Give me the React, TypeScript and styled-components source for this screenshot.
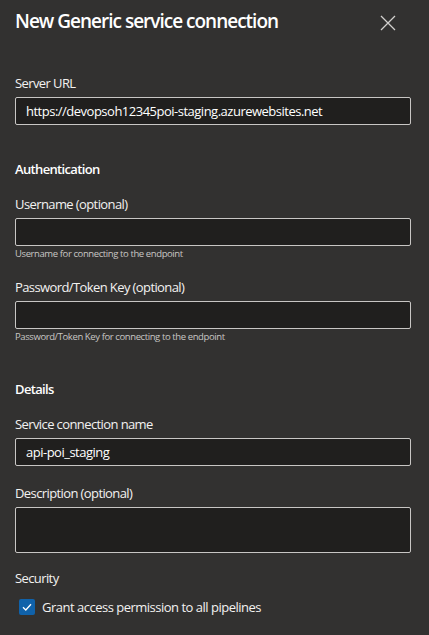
import React from "react";
import styled, { createGlobalStyle } from "styled-components";

const GlobalStyle = createGlobalStyle`
  html, body {
    margin: 0;
    padding: 0;
    background: #323130;
  }
  * { box-sizing: border-box; }
`;

const Panel = styled.div`
  width: 429px;
  height: 635px;
  background: #323130;
  padding: 7px 18px 0 15px;
  font-family: "Open Sans", "Noto Sans", sans-serif;
  color: #f3f2f1;
  overflow: hidden;
`;

const Header = styled.div`
  display: flex;
  align-items: center;
  justify-content: space-between;
  height: 28px;
`;

const Title = styled.h1`
  margin: 0;
  font-size: 19px;
  line-height: 28px;
  font-weight: 600;
  color: #ffffff;
  letter-spacing: -1px;
`;

const CloseButton = styled.button`
  display: flex;
  align-items: center;
  justify-content: center;
  width: 16px;
  height: 16px;
  padding: 0;
  margin: 3px 15px 0 0;
  border: none;
  background: transparent;
  color: #d2d0ce;
  cursor: pointer;
`;

const Body = styled.div`
  display: flex;
  flex-direction: column;
  margin-top: 38px;
`;

const SectionHeading = styled.div`
  font-size: 13px;
  line-height: 20px;
  font-weight: 600;
  color: #ffffff;
  margin-top: 34px;
  letter-spacing: -0.65px;
`;

const Field = styled.div<{ $gap?: number }>`
  display: flex;
  flex-direction: column;
  margin-top: ${(p) => (p.$gap ?? 15)}px;
`;

const Label = styled.label`
  font-size: 13px;
  line-height: 20px;
  color: #f3f2f1;
  margin-bottom: 4px;
  letter-spacing: -0.6px;
`;

const TextInput = styled.input`
  width: 100%;
  height: 28px;
  border: 1px solid #c8c6c4;
  border-radius: 2px;
  background: #201f1e;
  color: #ffffff;
  font-family: inherit;
  font-size: 13px;
  letter-spacing: -0.5px;
  padding: 0 10px;
  outline: none;
`;

const TextArea = styled.textarea`
  width: 100%;
  height: 46px;
  border: 1px solid #c8c6c4;
  border-radius: 2px;
  background: #201f1e;
  color: #ffffff;
  font-family: inherit;
  font-size: 13px;
  padding: 6px 10px;
  resize: none;
  outline: none;
  display: block;
`;

const Helper = styled.div`
  font-size: 9.5px;
  line-height: 16px;
  color: #c8c6c4;
  letter-spacing: -0.4px;
`;

const CheckRow = styled.label`
  display: flex;
  align-items: center;
  gap: 7px;
  margin: 5px 0 0 4px;
  font-size: 13px;
  line-height: 20px;
  color: #f3f2f1;
  letter-spacing: -0.5px;
`;

const CheckBox = styled.span`
  display: flex;
  align-items: center;
  justify-content: center;
  width: 16px;
  height: 16px;
  border-radius: 2px;
  background: #1062aa;
  flex-shrink: 0;
`;

const CloseIcon = () => (
  <svg width="16" height="16" viewBox="0 0 16 16" fill="none">
    <path d="M1 1 L15 15 M15 1 L1 15" stroke="currentColor" strokeWidth="1.3" />
  </svg>
);

const CheckIcon = () => (
  <svg width="12" height="12" viewBox="0 0 12 12" fill="none">
    <path d="M2 6.3 L4.8 9 L10 3.2" stroke="#ffffff" strokeWidth="1.3" />
  </svg>
);

export default function App() {
  return (
    <>
      <GlobalStyle />
      <Panel>
        <Header>
          <Title>New Generic service connection</Title>
          <CloseButton aria-label="Close">
            <CloseIcon />
          </CloseButton>
        </Header>
        <Body>
          <Field $gap={0}>
            <Label>Server URL</Label>
            <TextInput defaultValue="https://devopsoh12345poi-staging.azurewebsites.net" />
          </Field>

          <SectionHeading>Authentication</SectionHeading>
          <Field>
            <Label>Username (optional)</Label>
            <TextInput />
            <Helper>Username for connecting to the endpoint</Helper>
          </Field>
          <Field>
            <Label>Password/Token Key (optional)</Label>
            <TextInput type="password" />
            <Helper>Password/Token Key for connecting to the endpoint</Helper>
          </Field>

          <SectionHeading>Details</SectionHeading>
          <Field>
            <Label>Service connection name</Label>
            <TextInput defaultValue="api-poi_staging" />
          </Field>
          <Field $gap={17}>
            <Label>Description (optional)</Label>
            <TextArea />
          </Field>
          <Field>
            <Label>Security</Label>
          </Field>
          <CheckRow>
            <CheckBox>
              <CheckIcon />
            </CheckBox>
            Grant access permission to all pipelines
          </CheckRow>
        </Body>
      </Panel>
    </>
  );
}
